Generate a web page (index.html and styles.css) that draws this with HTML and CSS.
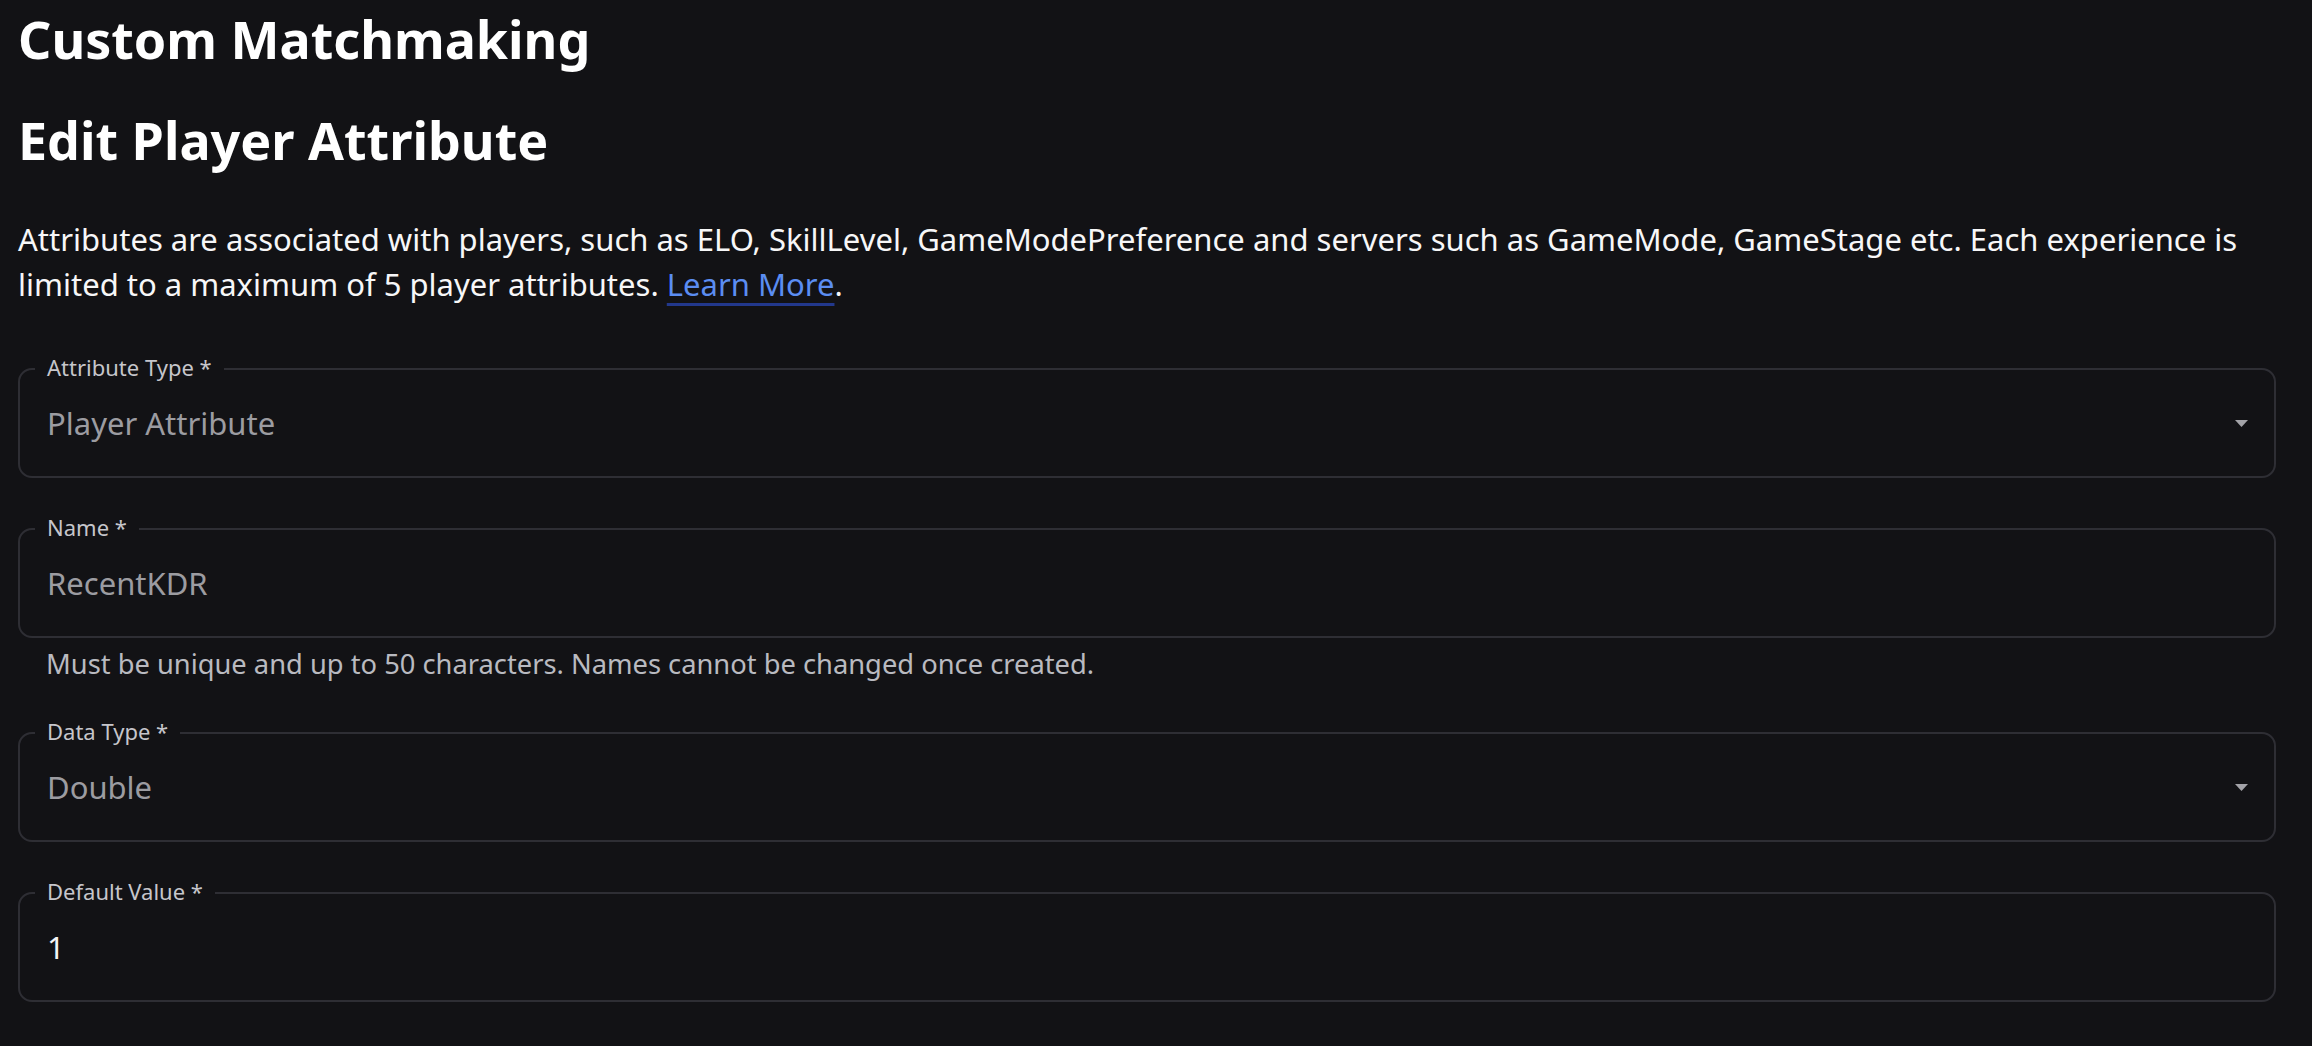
FILE: index.html
```html
<!DOCTYPE html>
<html lang="en">
<head>
<meta charset="utf-8">
<title>Edit Player Attribute</title>
<link rel="stylesheet" href="styles.css">
</head>
<body>
<main class="page">
  <h1 class="app-title">Custom Matchmaking</h1>
  <h2 class="page-title">Edit Player Attribute</h2>
  <p class="intro">Attributes are associated with players, such as ELO, SkillLevel, GameModePreference and servers such as GameMode, GameStage etc. Each experience is<br>limited to a maximum of 5 player attributes. <a class="link" href="#">Learn More</a>.</p>

  <form class="form">
    <div class="field">
      <div class="outline">
        <span class="label">Attribute Type *</span>
        <span class="value is-disabled">Player Attribute</span>
        <svg class="caret" viewBox="0 0 13 7" width="13" height="7" aria-hidden="true"><path d="M0 0h13L6.5 7z"/></svg>
      </div>
    </div>

    <div class="field">
      <div class="outline">
        <span class="label">Name *</span>
        <span class="value is-disabled">RecentKDR</span>
      </div>
      <p class="helper">Must be unique and up to 50 characters. Names cannot be changed once created.</p>
    </div>

    <div class="field">
      <div class="outline">
        <span class="label">Data Type *</span>
        <span class="value is-disabled">Double</span>
        <svg class="caret" viewBox="0 0 13 7" width="13" height="7" aria-hidden="true"><path d="M0 0h13L6.5 7z"/></svg>
      </div>
    </div>

    <div class="field">
      <div class="outline">
        <span class="label">Default Value *</span>
        <span class="value">1</span>
      </div>
    </div>
  </form>
</main>
</body>
</html>
```

FILE: styles.css
```css
html, body {
  margin: 0;
  background: #121215;
  color: #f7f7f8;
  font-family: "Noto Sans", "Open Sans", sans-serif;
}

.page {
  padding: 5px 36px 0 18px;
}

.app-title,
.page-title {
  margin: 0;
  font-size: 52px;
  line-height: 68px;
  font-weight: 700;
  color: #ffffff;
}

.page-title {
  margin-top: 33px;
}

.intro {
  margin: 43px 0 0;
  font-size: 31px;
  line-height: 45px;
  color: #f7f7f8;
}

.link {
  color: #5b8df2;
  text-decoration: underline;
  text-decoration-color: #22388c;
  text-decoration-thickness: 3px;
  text-underline-offset: 7px;
}

.form {
  display: flex;
  flex-direction: column;
  gap: 50px;
  margin-top: 61px;
}

.outline {
  position: relative;
  box-sizing: border-box;
  height: 110px;
  display: flex;
  align-items: center;
  padding: 0 26px 0 27px;
  border: 2px solid #2e2e34;
  border-radius: 14px;
}

/* floating label notched into the top border */
.label {
  position: absolute;
  top: -14px;
  left: 15px;
  padding: 0 12px;
  background: #121215;
  font-size: 22px;
  line-height: 22px;
  color: #c6c6cb;
}

.value {
  flex: 1;
  font-size: 31px;
  color: #f4f4f6;
}

.value.is-disabled {
  color: #9c9ca1;
}

.caret {
  flex: none;
  fill: #a3a3a8;
}

.helper {
  margin: 8px 0 0;
  padding-left: 28px;
  font-size: 27.3px;
  line-height: 36px;
  color: #b9bac0;
}
```
